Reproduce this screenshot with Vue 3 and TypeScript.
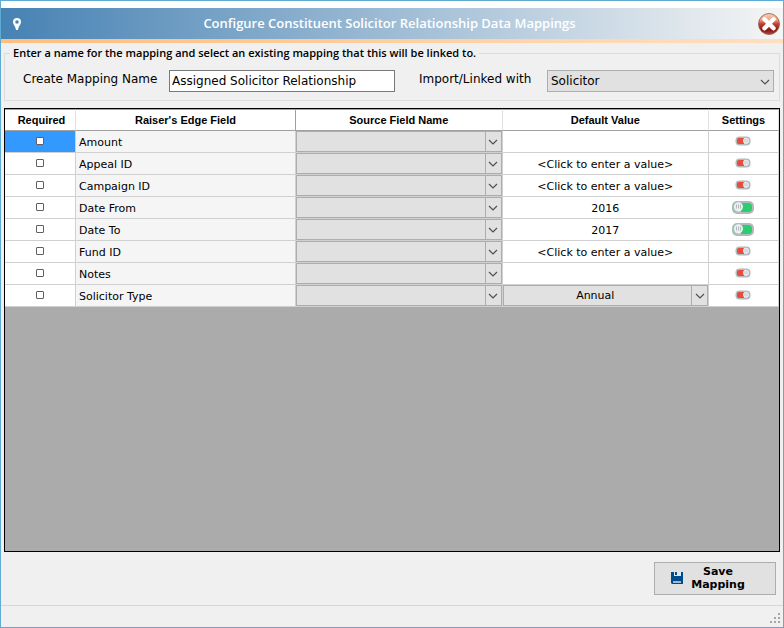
<script setup lang="ts">
import { ref } from 'vue'

interface MappingRow {
  field: string
  required: boolean
  source: string
  kind: 'text' | 'list'
  value: string
  enabled: boolean
}

const PROMPT = '<Click to enter a value>'

const mappingName = ref('Assigned Solicitor Relationship')
const linkedWith = ref('Solicitor')
const rows = ref<MappingRow[]>([
  { field: 'Amount', required: false, source: '', kind: 'text', value: '', enabled: false },
  { field: 'Appeal ID', required: false, source: '', kind: 'text', value: PROMPT, enabled: false },
  { field: 'Campaign ID', required: false, source: '', kind: 'text', value: PROMPT, enabled: false },
  { field: 'Date From', required: false, source: '', kind: 'text', value: '2016', enabled: true },
  { field: 'Date To', required: false, source: '', kind: 'text', value: '2017', enabled: true },
  { field: 'Fund ID', required: false, source: '', kind: 'text', value: PROMPT, enabled: false },
  { field: 'Notes', required: false, source: '', kind: 'text', value: '', enabled: false },
  { field: 'Solicitor Type', required: false, source: '', kind: 'list', value: 'Annual', enabled: false },
])
const selected = ref(0)
</script>

<template>
  <div class="window">
    <header class="titlebar">
      <svg class="pin" width="10" height="14" viewBox="0 0 10 14" aria-hidden="true">
        <path
          fill="#fff"
          fill-rule="evenodd"
          d="M5 1a4 4 0 0 0-4 4c0 2.500 2.600 4.200 3 8h2c.4-3.800 3-5.500 3-8a4 4 0 0 0-4-4zm0 2.200a1.800 1.800 0 1 1 0 3.600a1.800 1.800 0 0 1 0-3.600z"
        />
      </svg>
      <h1>Configure Constituent Solicitor Relationship Data Mappings</h1>
      <button type="button" class="close" aria-label="Close">
        <svg width="24" height="24" viewBox="0 0 24 24">
          <defs>
            <linearGradient id="closeFill" x1="0" y1="0" x2="0" y2="1">
              <stop offset="0" stop-color="#fbd0b8" />
              <stop offset="0.3" stop-color="#eda184" />
              <stop offset="0.5" stop-color="#c04030" />
              <stop offset="0.8" stop-color="#8f1712" />
              <stop offset="1" stop-color="#b8483c" />
            </linearGradient>
          </defs>
          <circle cx="12" cy="12" r="10.500" fill="url(#closeFill)" stroke="#8d5a54" stroke-width="0.800" />
          <path d="M7.500 7.300l9 9M16.500 7.300l-9 9" stroke="#fff" stroke-width="4.400" stroke-linecap="round" />
        </svg>
      </button>
    </header>
    <div class="accent"></div>

    <main class="content">
      <fieldset class="group">
        <legend>Enter a name for the mapping and select an existing mapping that this will be linked to.</legend>
        <div class="fields">
          <label for="mapping-name" class="first">Create Mapping Name</label>
          <input id="mapping-name" v-model="mappingName" type="text" class="name" />
          <label for="linked-with" class="second">Import/Linked with</label>
          <div class="combo linked">
            <select id="linked-with" v-model="linkedWith">
              <option>Solicitor</option>
            </select>
            <svg class="chevron" width="10" height="6" viewBox="0 0 10 6"><path d="M1 1l4 4l4-4" /></svg>
          </div>
        </div>
      </fieldset>

      <div class="grid">
        <table>
          <colgroup>
            <col class="c-required" />
            <col class="c-field" />
            <col />
            <col />
            <col class="c-settings" />
          </colgroup>
          <thead>
            <tr>
              <th scope="col">Required</th>
              <th scope="col" class="strong">Raiser's Edge Field</th>
              <th scope="col">Source Field Name</th>
              <th scope="col">Default Value</th>
              <th scope="col">Settings</th>
            </tr>
          </thead>
          <tbody>
            <tr v-for="(row, i) in rows" :key="row.field">
              <td class="check" :class="{ selected: i === selected }" @click="selected = i">
                <input v-model="row.required" type="checkbox" :aria-label="row.field" />
              </td>
              <td class="field">{{ row.field }}</td>
              <td>
                <div class="combo cell">
                  <select v-model="row.source" :aria-label="row.field">
                    <option value=""></option>
                  </select>
                  <span class="drop">
                    <svg class="chevron" width="10" height="6" viewBox="0 0 10 6"><path d="M1 1l4 4l4-4" /></svg>
                  </span>
                </div>
              </td>
              <td v-if="row.kind === 'list'">
                <div class="combo cell">
                  <select v-model="row.value" :aria-label="row.field">
                    <option>Annual</option>
                  </select>
                  <span class="drop">
                    <svg class="chevron" width="10" height="6" viewBox="0 0 10 6"><path d="M1 1l4 4l4-4" /></svg>
                  </span>
                </div>
              </td>
              <td v-else class="value">{{ row.value }}</td>
              <td class="settings">
                <button
                  type="button"
                  class="toggle"
                  :aria-label="row.field"
                  :aria-pressed="row.enabled"
                  @click="row.enabled = !row.enabled"
                >
                  <svg v-if="row.enabled" width="22" height="14" viewBox="0 0 22 14">
                    <rect x="0" y="1" width="22" height="13" rx="5" fill="#b3babd" />
                    <rect x="2" y="3" width="18" height="9" rx="3.500" fill="#2ecc71" />
                    <path d="M5.500 3h3.500v9h-3.500a3.500 3.500 0 0 1-3.500-3.500v-2a3.500 3.500 0 0 1 3.500-3.500z" fill="#a9dcc0" />
                    <circle cx="6.500" cy="6.700" r="4.500" fill="#ecf0f1" />
                    <path d="M4.500 4.500v4M6.500 4.500v4M8.500 4.500v4" stroke="#b3babd" stroke-width="1" />
                  </svg>
                  <svg v-else width="16" height="10" viewBox="0 0 16 10">
                    <rect x="0.500" y="0.500" width="15" height="9" rx="4" fill="#b3babd" />
                    <rect x="2" y="2" width="12" height="6" rx="2" fill="#e74c3c" />
                    <path d="M9 2h3a2 2 0 0 1 2 2v2a2 2 0 0 1-2 2h-3z" fill="#c9cfd1" />
                    <circle cx="11" cy="4.700" r="3" fill="#e3e8ea" />
                    <path d="M10 3v3M12 3v3" stroke="#c3c9cc" stroke-width="0.800" />
                  </svg>
                </button>
              </td>
            </tr>
          </tbody>
        </table>
      </div>

      <div class="actions">
        <button type="button" class="save">
          <svg width="12" height="12" viewBox="0 0 12 12" aria-hidden="true">
            <path d="M0 0h12v12H1l-1-1z" fill="#004b8d" />
            <path d="M3 0h7v4h-7z" fill="#dfe5ea" />
            <path d="M4 0h2v3h-2z" fill="#004b8d" />
            <path d="M2 9h8v2h-8z" fill="#9db9d2" />
          </svg>
          <span>Save Mapping</span>
        </button>
      </div>
    </main>

    <footer class="status">
      <svg width="11" height="11" viewBox="0 0 11 11" aria-hidden="true">
        <path
          d="M8 0h2v2h-2zM4 4h2v2h-2zM8 4h2v2h-2zM0 8h2v2h-2zM4 8h2v2h-2zM8 8h2v2h-2z"
          fill="#a6a6a6"
        />
      </svg>
    </footer>
  </div>
</template>

<style>
body {
  margin: 0;
}
</style>

<style scoped>
* {
  box-sizing: border-box;
}

.window {
  display: flex;
  flex-direction: column;
  min-height: 100vh;
  border: 1px solid #60abd3;
  background: #f0f0f0;
  color: #000;
  font: 11px/14px Verdana, "DejaVu Sans", sans-serif;
}

.titlebar {
  display: flex;
  align-items: center;
  height: 38px;
  padding-left: 11px;
  border-top: 7px solid #fff;
  background: linear-gradient(to right, #4682b4, #f5f5f5);
}

.accent {
  height: 4px;
  background: linear-gradient(to right, #ffbe7d, #ffdfc0);
}

h1 {
  flex: 1;
  margin: 0;
  padding-bottom: 2px;
  color: #fff;
  font: 600 13px/18px "Segoe UI", "Open Sans", sans-serif;
  text-align: center;
}

.close,
.toggle {
  display: flex;
  padding: 0;
  border: 0;
  background: none;
}

.close {
  margin-right: 2px;
}

.content {
  display: flex;
  flex: 1;
  flex-direction: column;
  padding: 3px 3px 0;
}

.group {
  min-width: 0;
  margin: 0;
  padding: 0 5px 8px 18px;
  border: 1px solid #dcdcdc;
}

legend {
  margin-left: -13px;
  padding: 0 3px;
  font: 600 11px/14px "Segoe UI", "Open Sans", sans-serif;
}

.fields {
  display: flex;
  align-items: center;
  padding-top: 10px;
  font-size: 12px;
}

.fields label {
  padding-bottom: 4px;
  white-space: nowrap;
}

.fields .first {
  width: 138px;
}

.name {
  width: 226px;
  height: 22px;
  margin-left: 8px;
  padding: 0 2px;
  border: 1px solid #7a7a7a;
  border-radius: 0;
  background: #fff;
  font: 12px/18px Verdana, "DejaVu Sans", sans-serif;
}

.fields .second {
  width: 120px;
  margin-left: 24px;
}

.combo {
  position: relative;
}

.combo select {
  width: 100%;
  height: 100%;
  padding: 0 18px 0 3px;
  appearance: none;
  border: 1px solid #adadad;
  border-radius: 0;
  background: #e1e1e1;
  color: #000;
  font: inherit;
}

.chevron {
  fill: none;
  stroke: #505050;
  stroke-width: 1.2px;
}

.linked {
  flex: 1;
  height: 22px;
  margin-left: 8px;
}

.linked .chevron {
  position: absolute;
  top: 9px;
  right: 4px;
  pointer-events: none;
}

.grid {
  flex: 1;
  margin-top: 7px;
  border: 1px solid #000;
  background: #ababab;
}

table {
  width: 100%;
  table-layout: fixed;
  border-collapse: separate;
  border-spacing: 0;
}

.c-required {
  width: 71px;
}

.c-field {
  width: 220px;
}

.c-settings {
  width: 70px;
}

th {
  height: 22px;
  padding: 0;
  border-top: 1px solid #a0a0a0;
  border-right: 1px solid #e0e0e0;
  border-bottom: 1px solid #a0a0a0;
  background: #fff;
  font: bold 11px/14px "Liberation Sans", Arial, sans-serif;
}

th:first-child {
  padding-left: 3px;
}

th.strong {
  border-right-color: #a0a0a0;
}

td {
  height: 22px;
  padding: 0;
  border-right: 1px solid #d0d0d0;
  border-bottom: 1px solid #d0d0d0;
  background: #fff;
}

td.field {
  padding: 2px 0 0 3px;
  background: #f5f5f5;
}

td.value {
  padding-top: 2px;
  text-align: center;
}

td.check {
  padding-bottom: 2px;
}

td.selected {
  background: #3399ff;
}

.check input {
  display: block;
  width: 8px;
  height: 8px;
  margin: 0 auto;
  appearance: none;
  border: 1px solid #606060;
  border-radius: 1px;
  background: #fff;
}

.check input:checked {
  background: #606060;
}

.cell {
  height: 21px;
}

.cell select {
  padding: 0 20px 0 0;
  text-align-last: center;
}

.drop {
  display: flex;
  position: absolute;
  top: 1px;
  right: 1px;
  bottom: 1px;
  align-items: center;
  justify-content: center;
  width: 16px;
  border-left: 1px solid #adadad;
  pointer-events: none;
}

.toggle {
  margin: 0 auto;
}

td.settings {
  padding: 0 2px 2px 0;
}

.actions {
  display: flex;
  justify-content: flex-end;
  padding: 10px 4px;
}

.save {
  display: flex;
  align-items: center;
  width: 122px;
  height: 33px;
  padding: 0 16px 2px;
  gap: 8px;
  border: 1px solid #adadad;
  background: #e1e1e1;
  color: #000;
  font: bold 11px/13px Verdana, "DejaVu Sans", sans-serif;
}

.save svg {
  flex: none;
}

.save span {
  width: 54px;
}

.status {
  display: flex;
  align-items: flex-end;
  justify-content: flex-end;
  height: 22px;
  padding: 0 2px 3px 0;
  border-top: 1px solid #d7d7d7;
}
</style>
